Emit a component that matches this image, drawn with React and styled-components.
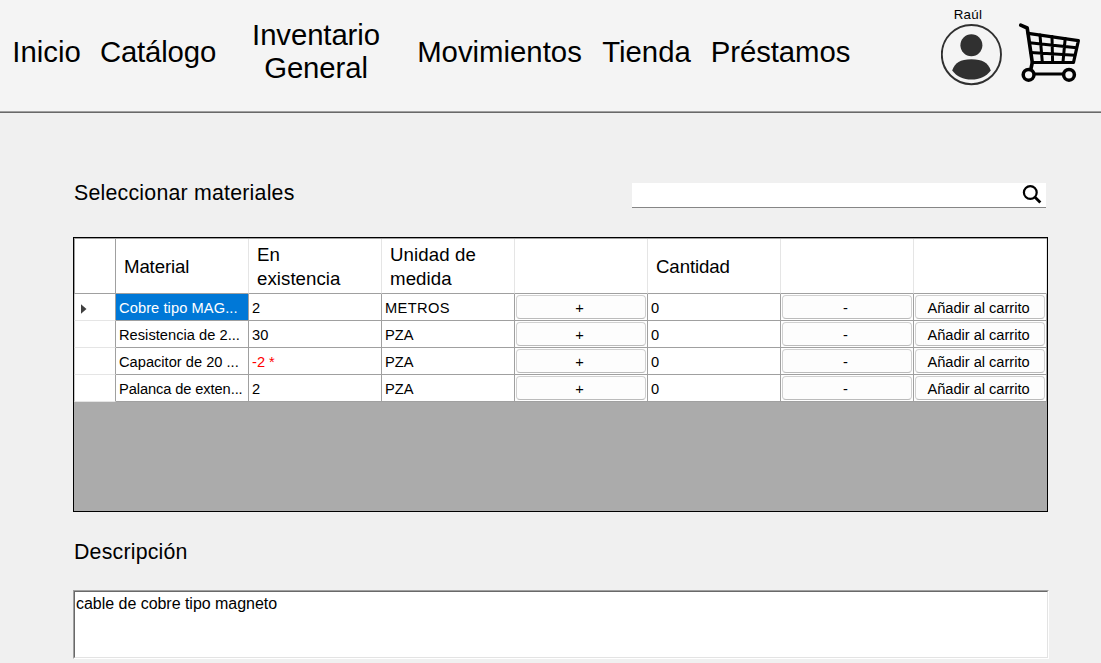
import React from "react";
import styled, { createGlobalStyle } from "styled-components";

const GlobalStyle = createGlobalStyle`
  * { box-sizing: border-box; }
  body {
    margin: 0;
    background: #f0f0f0;
    color: #000;
    font-family: "Liberation Sans", Arial, sans-serif;
    overflow: hidden;
  }
  button, input { font-family: inherit; color: inherit; }
`;

const Page = styled.div`
  height: 663px;
  display: flex;
  flex-direction: column;
`;

const Header = styled.header`
  height: 113px;
  flex: none;
  display: flex;
  align-items: flex-start;
  background: #f4f4f4;
  border-bottom: 1px solid #696969;
  box-shadow: inset 0 -1px 0 #a0a0a0;
`;

const Nav = styled.nav`
  display: flex;
  align-items: center;
  height: 102px;
  padding-left: 10px;
  width: 941px;
`;

const NavItem = styled.a`
  font-size: 29.33px;
  line-height: 33px;
  text-align: center;
  white-space: nowrap;
  letter-spacing: ${(p) => p.$spacing || 0}px;
  width: ${(p) => p.$width}px;
  flex: none;
`;

const User = styled.div`
  width: 62px;
  display: flex;
  flex-direction: column;
  align-items: center;
  padding-top: 6px;
`;

const UserName = styled.span`
  font-size: 13.33px;
  line-height: 17px;
  letter-spacing: 0.3px;
  margin-right: 8px;
  margin-bottom: 1px;
`;

const CartIcon = styled.svg`
  display: block;
  margin: 20px 0 0 14px;
`;

const Main = styled.main`
  padding: 66px 52px 0 73px;
  display: flex;
  flex-direction: column;
`;

const Toolbar = styled.div`
  display: flex;
  justify-content: space-between;
  align-items: flex-start;
  height: 58px;
  padding-right: 2px;
  width: 975px;
`;

const Title = styled.h2`
  margin: 0 0 0 1px;
  font-size: 21.33px;
  font-weight: 400;
  line-height: 28px;
  letter-spacing: ${(p) => p.$spacing}px;
`;

const Search = styled.label`
  margin-top: 4px;
  width: 414px;
  height: 25px;
  display: flex;
  align-items: flex-start;
  background: #fff;
  border-bottom: 1px solid #868686;
`;

const SearchInput = styled.input`
  flex: 1;
  height: 23px;
  border: 0;
  outline: 0;
  background: transparent;
  font-size: 16px;
`;

const SearchIcon = styled.svg`
  margin: 2px 4px 0 0;
`;

const Grid = styled.div`
  width: 975px;
  height: 275px;
  background: #ababab;
  border: 1px solid #000;
`;

const Row = styled.div`
  display: grid;
  grid-template-columns: 42px repeat(7, 133px);
  height: ${(p) => (p.$head ? 56 : 27)}px;
  background: #fff;
  ${(p) => p.$head && "border-top: 1px solid #a0a0a0;"}
`;

const HeadCell = styled.div`
  display: flex;
  align-items: center;
  padding: 2px 24px 0 8px;
  font-size: 18.67px;
  line-height: 24px;
  letter-spacing: ${(p) => p.$spacing || 0}px;
  border-right: 1px solid #e5e5e5;
  border-bottom: 1px solid #a0a0a0;
`;

const CornerCell = styled.div`
  border: 1px solid #a0a0a0;
  border-top: 0;
`;

const RowHead = styled.div`
  display: flex;
  align-items: center;
  padding: 3px 0 0 6px;
  border-right: 1px solid #a0a0a0;
  border-bottom: 1px solid #e5e5e5;
  border-left: 1px solid #c8c8c8;
`;

const Cell = styled.div`
  padding: ${(p) => (p.$button ? "1px" : "1px 0 0 3px")};
  font-size: 14.67px;
  line-height: 26px;
  white-space: nowrap;
  overflow: hidden;
  letter-spacing: ${(p) => p.$spacing || 0}px;
  color: ${(p) => (p.$selected ? "#fff" : p.$alert ? "#f00" : "#000")};
  background: ${(p) => (p.$selected ? "#0078d7" : "#fff")};
  border-right: 1px solid #a0a0a0;
  border-bottom: 1px solid #a0a0a0;
`;

const GridButton = styled.button`
  display: block;
  width: 130px;
  height: 24px;
  padding: 2px 3px 0 0;
  font-size: 14.67px;
  line-height: 20px;
  letter-spacing: ${(p) => p.$spacing || 0}px;
  text-align: center;
  background: #fdfdfd;
  border: 1px solid #d0d0d0;
  border-bottom-color: #bbb;
  border-radius: 4px;
`;

const DescriptionTitle = styled(Title)`
  margin-top: 26px;
`;

const Sunken = styled.div`
  margin-top: 24px;
  width: 976px;
  height: 69px;
  border: 1px solid;
  border-color: #a0a0a0 #fff #fff #a0a0a0;
`;

const Description = styled.div`
  height: 67px;
  padding: 1px 0 0 1px;
  border: 1px solid;
  border-color: #696969 #e3e3e3 #e3e3e3 #696969;
  background: #fff;
  font-size: 16px;
  line-height: 22px;
  letter-spacing: -0.03px;
`;

const nav = [
  { label: "Inicio", width: 73 },
  { label: "Catálogo", width: 150, spacing: -0.15 },
  { label: ["Inventario", "General"], width: 166, spacing: -0.1 },
  { label: "Movimientos", width: 201 },
  { label: "Tienda", width: 93 },
  { label: "Préstamos", width: 175, spacing: -0.06 },
];

const rows = [
  { name: "Cobre tipo MAG...", stock: "2", unit: "METROS", selected: true, spacing: 0.08 },
  { name: "Resistencia de 2...", stock: "30", unit: "PZA", spacing: 0.02 },
  { name: "Capacitor de 20 ...", stock: "-2 *", unit: "PZA", alert: true, spacing: 0 },
  { name: "Palanca de exten...", stock: "2", unit: "PZA", spacing: -0.1 },
];

function Avatar() {
  return (
    <svg width="62" height="62" viewBox="0 0 62 62">
      <circle cx="30.4" cy="30.6" r="29.6" fill="none" stroke="#303030" strokeWidth="1.9" />
      <circle cx="30.4" cy="21.2" r="11" fill="#303030" />
      <path d="M11.2 46.5C14 38.5 19 35.2 30.4 35.2S47 38.5 49.8 46.5C45.5 52.5 38.5 55.6 30.4 55.6S15.5 52.5 11.2 46.5Z" fill="#303030" />
    </svg>
  );
}

function Cart() {
  return (
    <CartIcon width="66" height="64" viewBox="1017 20 66 64" fill="none" stroke="#000" strokeLinecap="round" strokeLinejoin="round">
      <path d="M1020.7 25.2L1027.2 28L1032.3 62.5L1030.9 69" strokeWidth="3.6" />
      <path d="M1028.2 33.4L1078.4 40.6L1073.5 62.5H1032.3" strokeWidth="3.2" />
      <path d="M1029.5 42.7L1076.5 47.7M1030.7 52.4L1074.8 55.2M1040 35L1042.3 62M1052 36.5L1052.6 62M1065.2 38.5L1063 62" strokeWidth="3" />
      <path d="M1035 74H1063" strokeWidth="3.2" />
      <circle cx="1028.6" cy="74.8" r="5.4" strokeWidth="3.5" />
      <circle cx="1069" cy="74.8" r="5.4" strokeWidth="3.5" />
    </CartIcon>
  );
}

export default function App() {
  return (
    <Page>
      <GlobalStyle />
      <Header>
        <Nav>
          {nav.map((n) => (
            <NavItem key={n.label} $width={n.width} $spacing={n.spacing}>
              {Array.isArray(n.label) ? (
                <>
                  {n.label[0]}
                  <br />
                  {n.label[1]}
                </>
              ) : (
                n.label
              )}
            </NavItem>
          ))}
        </Nav>
        <User>
          <UserName>Raúl</UserName>
          <Avatar />
        </User>
        <Cart />
      </Header>
      <Main>
        <Toolbar>
          <Title $spacing={0.22}>Seleccionar materiales</Title>
          <Search>
            <SearchInput aria-label="Buscar" />
            <SearchIcon width="20" height="20" viewBox="0 0 20 20" fill="none" stroke="#000">
              <circle cx="8.3" cy="7.5" r="6.4" strokeWidth="2.2" />
              <path d="M12.8 12L18.3 17.5" strokeWidth="2.8" />
            </SearchIcon>
          </Search>
        </Toolbar>
        <Grid>
          <Row $head>
            <CornerCell />
            <HeadCell $spacing={-0.15}>Material</HeadCell>
            <HeadCell $spacing={0.05}>En existencia</HeadCell>
            <HeadCell $spacing={0.1}>Unidad de medida</HeadCell>
            <HeadCell />
            <HeadCell $spacing={-0.1}>Cantidad</HeadCell>
            <HeadCell />
            <HeadCell />
          </Row>
          {rows.map((r) => (
            <Row key={r.name}>
              <RowHead>
                {r.selected && (
                  <svg width="6" height="10" viewBox="0 0 6 10">
                    <path d="M0 0.3L5.5 5L0 9.7Z" fill="#404040" />
                  </svg>
                )}
              </RowHead>
              <Cell $selected={r.selected} $spacing={r.spacing}>{r.name}</Cell>
              <Cell $alert={r.alert}>{r.stock}</Cell>
              <Cell $spacing={r.unit === "METROS" ? 0.35 : 0}>{r.unit}</Cell>
              <Cell $button><GridButton>+</GridButton></Cell>
              <Cell>0</Cell>
              <Cell $button><GridButton>-</GridButton></Cell>
              <Cell $button><GridButton $spacing={-0.03}>Añadir al carrito</GridButton></Cell>
            </Row>
          ))}
        </Grid>
        <DescriptionTitle $spacing={0.2}>Descripción</DescriptionTitle>
        <Sunken>
          <Description>cable de cobre tipo magneto</Description>
        </Sunken>
      </Main>
    </Page>
  );
}
